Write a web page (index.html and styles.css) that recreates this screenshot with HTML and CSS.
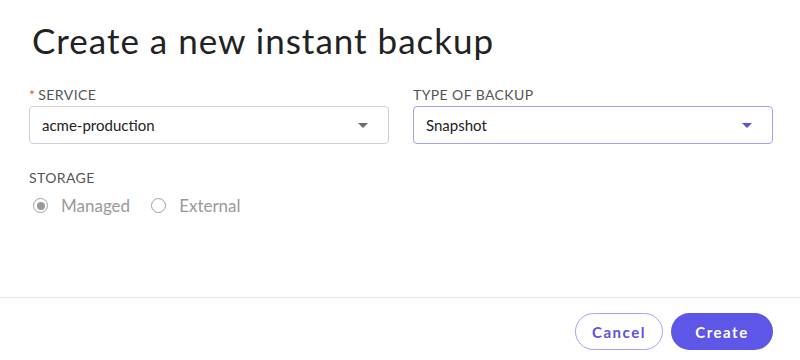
FILE: index.html
```html
<!DOCTYPE html>
<html lang="en">
<head>
    <meta charset="UTF-8">
    <meta name="viewport" content="width=device-width, initial-scale=1.0">
    <title>Create a new instant backup</title>
    <link rel="stylesheet" href="styles.css">
</head>
<body>
    <div class="modal">
        <div class="modal-body">
            <h1>Create a new instant backup</h1>

            <div class="form-row">
                <div class="form-control">
                    <label><span class="required">*</span>SERVICE</label>
                    <div class="select">
                        <span>acme-production</span>
                        <span class="caret"></span>
                    </div>
                </div>
                <div class="form-control">
                    <label>TYPE OF BACKUP</label>
                    <div class="select select-active">
                        <span>Snapshot</span>
                        <span class="caret"></span>
                    </div>
                </div>
            </div>

            <div class="form-control storage">
                <label>STORAGE</label>
                <div class="radios">
                    <div class="radio checked"><span class="dot"></span>Managed</div>
                    <div class="radio"><span class="dot"></span>External</div>
                </div>
            </div>
        </div>

        <div class="modal-footer">
            <button class="btn btn-outline">Cancel</button>
            <button class="btn btn-primary">Create</button>
        </div>
    </div>
</body>
</html>
```

FILE: styles.css
```css
body {
    font-family: Lato, "Open Sans", sans-serif;
    background-color: #fff;
    color: #222;
    margin: 0;
    padding: 0;
}
.modal {
    height: 360px;
    display: flex;
    flex-direction: column;
}
.modal-body {
    flex: 1;
    padding: 18px 27px 0 29px;
}
h1 {
    margin: 0 0 0 3px;
    font-size: 35px;
    font-weight: 400;
    line-height: 44px;
    letter-spacing: 1px;
    color: #222;
}
.form-row {
    display: grid;
    grid-template-columns: 1fr 1fr;
    gap: 24px;
    margin-top: 24px;
}
.form-control label {
    display: block;
    font-size: 14px;
    line-height: 17px;
    letter-spacing: 0.4px;
    color: #555;
    margin-bottom: 3px;
}
.required {
    color: #e0504a;
    margin-right: 3px;
}
.select {
    height: 36px;
    border: 1px solid #cfcfcf;
    border-radius: 4px;
    display: flex;
    align-items: center;
    justify-content: space-between;
    padding: 0 20px 0 12px;
    font-size: 15px;
    color: #222;
}
.select-active {
    border-color: #a99ff5;
}
.caret {
    width: 0;
    height: 0;
    border-left: 5px solid transparent;
    border-right: 5px solid transparent;
    border-top: 5px solid #6b6b6b;
}
.select-active .caret {
    border-top-color: #5b52e0;
}
.storage {
    margin-top: 25px;
}
.storage label {
    margin-bottom: 9px;
}
.radios {
    display: flex;
    gap: 21px;
    margin-left: 4px;
}
.radio {
    display: flex;
    align-items: center;
    gap: 13px;
    font-size: 17px;
    color: #9a9a9a;
}
.dot {
    width: 13px;
    height: 13px;
    border: 1.5px solid #a0a0a0;
    border-radius: 50%;
    display: flex;
    align-items: center;
    justify-content: center;
}
.radio.checked .dot::after {
    content: "";
    width: 8px;
    height: 8px;
    border-radius: 50%;
    background: #9a9a9a;
}
.modal-footer {
    border-top: 1px solid #e6e6e6;
    padding: 15px 27px 10px;
    display: flex;
    justify-content: flex-end;
    gap: 8px;
}
.btn {
    font-family: Lato, sans-serif;
    font-size: 15px;
    font-weight: 700;
    letter-spacing: 1.5px;
    height: 37px;
    border-radius: 19px;
    cursor: pointer;
}
.btn-outline {
    width: 88px;
    background: #fff;
    color: #5b52e0;
    border: 1px solid #a99ff5;
}
.btn-primary {
    width: 102px;
    background: #5e56e6;
    color: #fff;
    border: none;
}
```
